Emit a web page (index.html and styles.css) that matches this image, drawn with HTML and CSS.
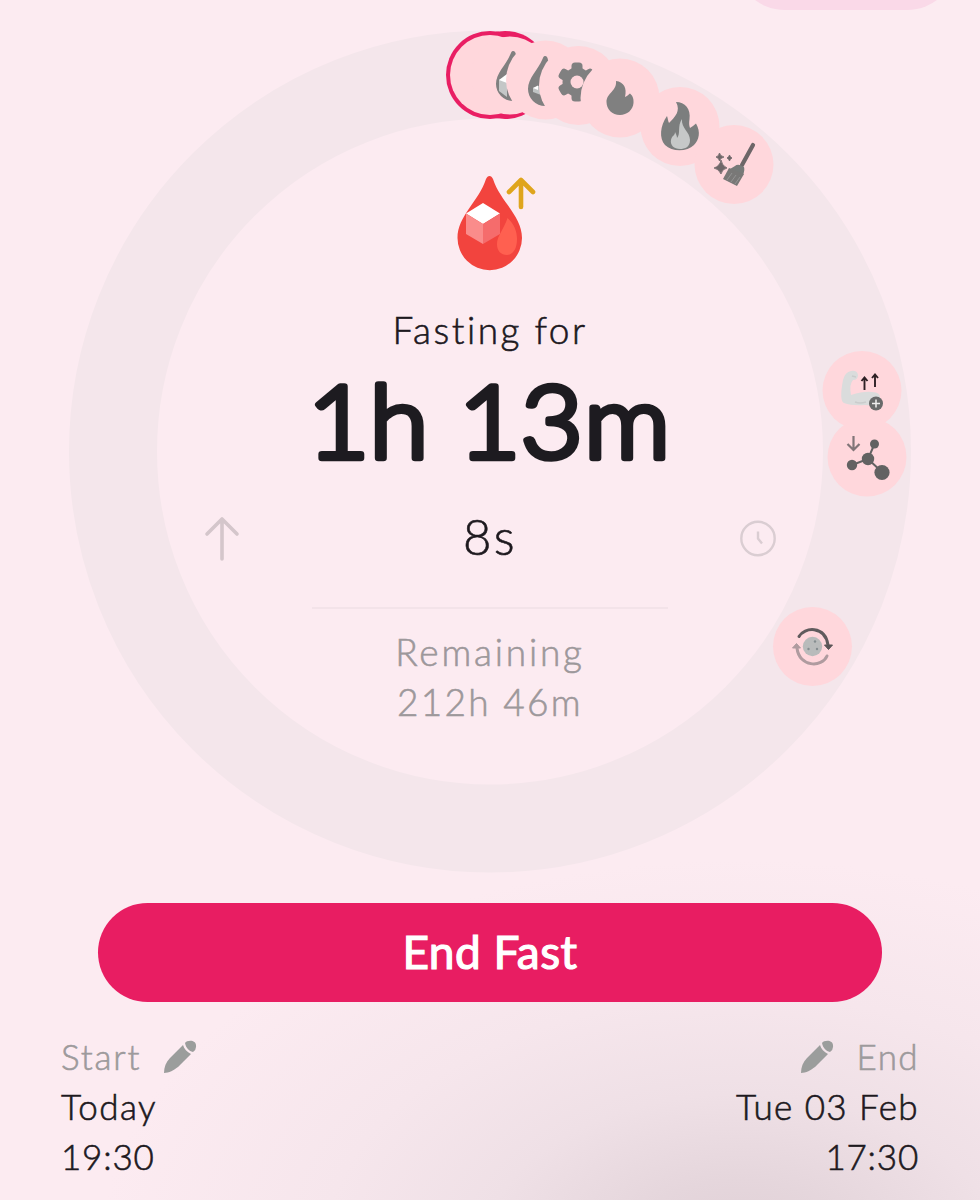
FILE: index.html
```html
<!DOCTYPE html>
<html lang="en">
<head>
<meta charset="utf-8">
<title>Fasting timer</title>
<link rel="stylesheet" href="styles.css">
</head>
<body>
<main class="screen">
  <div class="top-pill"></div>
  <section class="dial">
    <svg class="ring" viewBox="0 0 980 880" width="980" height="880">
      <defs>
        <g id="node"><circle r="39.5" fill="#ffd7dc"/></g>
        <g id="drop">
          <path d="M0-25C1.800-25 2.600-23.500 3-21C7-10 17-5 17 8A17 17 0 0 1-17 8C-17-3-7-11-2.500-22C-1.800-23.500-1.500-25 0-25Z" fill="#808080"/>
        </g>
      </defs>
      <circle cx="490" cy="451.500" r="377" fill="none" stroke="#f4e6eb" stroke-width="88"/>
      <g fill="#e91e63">
        <circle cx="490" cy="75" r="44"/><circle cx="505" cy="75" r="44"/>
      </g>
      <g fill="#ffd7dc">
        <circle cx="490" cy="75" r="40"/><circle cx="510" cy="75.500" r="39"/>
      </g>
      <use href="#drop" x="513" y="76"/>
      <path d="M499 80L507 76V97L499 91Z" fill="#c4c7c7"/><path d="M499 80L507 74V83Z" fill="#fff"/>
      <use href="#node" x="545.500" y="80"/>
      <use href="#drop" x="545" y="81"/>
      <path d="M533 88L541 85V95L533 92Z" fill="#c0c4c4"/><path d="M533 88L538 85.500V90Z" fill="#fff"/>
      <use href="#node" x="578.500" y="85.500"/>
      <g transform="translate(577 82)" fill="#808080">
        <circle r="14.500"/>
        <rect x="-5.500" y="-19.500" width="11" height="39" rx="3.500"/><rect x="-5.500" y="-19.500" width="11" height="39" rx="3.500" transform="rotate(60)"/><rect x="-5.500" y="-19.500" width="11" height="39" rx="3.500" transform="rotate(120)"/>
        <circle r="6.500" fill="#ffd7dc"/>
      </g>
      <use href="#node" x="620" y="98"/>
      <path d="M616 81C624 82 627 88 625 97C628 96 629 94 630 93.500C632 95 634 98 633.500 103C633 110 627 115 620 115C612 115 606.500 109 606.500 102C606.500 93 617 91 616 81Z" fill="#808080"/>
      <use href="#node" x="680" y="126.500"/>
      <path d="M676 102C685 102 691 109 689.500 119C689 123 689 125 690 128C692 127 694 125 696 123.500C701 132 699 140 694 145C687 152 672 152 665 145C659 138 660 126 667 116C668 119 668 121 669 123C675 117 681 111 676 102Z" fill="#7c7e7e"/>
      <path d="M682 119C681 128 690 132 690 140C690 147 685 149 680 149C674 149 670 145 671 140C672 135 675 136 675 132C676 134 677 136 677 138C681 134 677 126 682 119Z" fill="#c6c8c8"/>
      <use href="#node" x="734" y="164.500"/>
      <g fill="#706769">
        <path d="M753 145L742 165" fill="none" stroke="#6d6668" stroke-width="4.200" stroke-linecap="round"/>
        <path d="M735 166Q738 163 744 167Q745 170 743 175L730 169Z" fill="#777a79"/>
        <path d="M729 168L744 174L737 186L723 179Z" fill="#797877"/>
        <path d="M732 173L727 180M736 175L731 182M740 177L735 184" stroke="#9b9b9b" stroke-width=".8"/>
        <path d="M721 160Q722 166 727 168Q722 169 721 174Q719 169 714 168Q720 166 721 160M719.500 153Q720 156 724 157Q720 158 719.500 161Q719 158 716 157Q719 156 719.500 153M729.500 155Q730 157 732 158Q730 159 729.500 161Q729 159 727 158Q729 157 729.500 155" stroke="#706769" stroke-width=".8"/>
      </g>
      <use href="#node" x="862" y="390.500"/>
      <path d="M843 380Q845 372 851 371Q857 370 858 375Q858 380 853 380Q849 384 851 395Q864 391 872 392Q881 392 880 399Q877 406 865 405Q852 406 844 403Q839 401 843 380Z" fill="#dadcdc"/>
      <path d="M852 376L856 377M855 402Q860 404 866 402" fill="none" stroke="#cacccc" stroke-width="1.500"/>
      <path d="M864.500 390V378M861.500 381L864.500 377.500L867.500 381M875 387V375M872 378L875 374.500L878 378" fill="none" stroke="#2d2024" stroke-width="1.900"/>
      <circle cx="876" cy="403.500" r="7" fill="#686a6a"/><path d="M872 403.500H880M876 399.500V407.500" stroke="#eee" stroke-width="1.500"/>
      <use href="#node" x="867" y="457"/>
      <path d="M853.500 436V449M847.500 444L853.500 450L859.500 444" fill="none" stroke="#817578" stroke-width="2.200"/>
      <g fill="#626262"><path d="M852 465L868 459L874.500 444M868 459L882 472" fill="none" stroke="#626262" stroke-width="2"/><circle cx="852" cy="465" r="5.200"/><circle cx="868" cy="459" r="6.200"/><circle cx="874.500" cy="444" r="4.500"/><circle cx="882" cy="472.500" r="7.600"/></g>
      <use href="#node" x="812.500" y="646.500"/>
      <path d="M799 636.500C804 627 825 625 828 645" fill="none" stroke="#605b5d" stroke-width="3" stroke-linecap="round"/><path d="M824.500 645H832.500L828.500 649.500Z" fill="#5a5557" stroke="#5a5557" stroke-linejoin="round"/>
      <path d="M827 656C822 668 799 667 797 648" fill="none" stroke="#af9b9f" stroke-width="3" stroke-linecap="round"/><path d="M792.500 648H800.500L796.500 643.500Z" fill="#af9b9f" stroke="#af9b9f" stroke-linejoin="round"/>
      <circle cx="812.500" cy="646.500" r="9.700" fill="#b9bbbb"/><g fill="#858d90"><circle cx="815" cy="641.500" r="1.200"/><circle cx="808.500" cy="649" r="1.200"/><circle cx="817" cy="649" r="1.200"/></g>
    </svg>
    <div class="readout">
      <svg class="stage-icon" viewBox="450 170 90 104" width="90" height="104">
        <path d="M489.500 176C491 176 492 177 493 179C500 201 522 216 522 238A32.250 32.250 0 0 1 457.500 238C457.500 216 479 201 486 179C487 177 488 176 489.500 176Z" fill="#f2443e"/>
        <path d="M507.500 218C514 224 517 231 517 239C517 250 512 255 507 255C501 255 497 251 497 244C497 236 504 229 507.500 218Z" fill="#ff6050"/>
        <path d="M466 213.500L483 203L500 213.500L483 224Z" fill="#fff"/><path d="M466 213.500L483 224V244L466 234Z" fill="#fa8c8b"/><path d="M500 213.500L483 224V244L500 234Z" fill="#f56c6c"/>
        <path d="M521 207V180M509 192L521 180L533 192" fill="none" stroke="#dfa51d" stroke-width="4.600" stroke-linecap="round" stroke-linejoin="round"/>
      </svg>
      <p class="caption">Fasting for</p>
      <svg class="elapsed" viewBox="0 0 380 110" width="380" height="110"><text transform="scale(1.06 1)" x="5.200 63.800 115 147.700 206.400 266" y="86.500">1h 13m</text></svg>
      <div class="seconds-row">
        <svg width="36" height="46" viewBox="0 0 36 46"><path d="M18 43V3M3 18L18 3L33 18" fill="none" stroke="#d4c6cb" stroke-width="3.600" stroke-linecap="round" stroke-linejoin="round"/></svg>
        <p class="seconds">8s</p>
        <svg width="36" height="38" viewBox="1 0 36 38"><circle cx="19" cy="18.500" r="16.700" fill="none" stroke="#dacdd2" stroke-width="2.400"/><path d="M19 11.500V18.500L23 23.500" fill="none" stroke="#dacdd2" stroke-width="2.400"/></svg>
      </div>
      <div class="rule"></div>
      <p class="remaining label">Remaining</p>
      <p class="remaining value">212h 46m</p>
    </div>
  </section>
  <button class="end-fast">End Fast</button>
  <section class="times">
    <div class="time">
      <div class="heading"><span class="start">Start</span>
        <svg width="34" height="34" viewBox="0 0 34 34" fill="#9b9d9c"><path d="M1 33C1 27 3 22 7 18L20 5C21 9 24 12 28 14L15 27C11 30 6 33 1 33Z"/><path d="M22 3C24 0 34-1 33 7Q33 10 30 12C26 11 23 8 22 3Z"/></svg>
      </div>
      <p class="today">Today</p><p class="clock">19:30</p>
    </div>
    <div class="time time-end">
      <div class="heading">
        <svg width="34" height="34" viewBox="0 0 34 34" fill="#9b9d9c"><path d="M1 33C1 27 3 22 7 18L20 5C21 9 24 12 28 14L15 27C11 30 6 33 1 33Z"/><path d="M22 3C24 0 34-1 33 7Q33 10 30 12C26 11 23 8 22 3Z"/></svg>
        <span class="end">End</span></div>
      <p class="date">Tue 03 Feb</p><p class="clock">17:30</p>
    </div>
  </section>
</main>
</body>
</html>
```
FILE: styles.css
```css
* { box-sizing: border-box; }
body { margin: 0; font-family: Lato, "Noto Sans", sans-serif; font-weight: 300; color: #1d191e; -webkit-text-stroke: .6px; }
p { margin: 0; white-space: nowrap; }
svg { display: block; flex: none; }
.screen {
  position: relative; width: 980px; height: 1200px; overflow: hidden;
  display: flex; flex-direction: column;
  background: radial-gradient(ellipse 640px 390px at 740px 1250px, #dfcfd5 0%, #e5d6dc 18%, #efe0e6 40%, #f6e6ec 65%, rgba(252,235,241,0) 100%), #fcebf1;
}
.top-pill { position: absolute; left: 735px; top: -90px; width: 222px; height: 100px; border-radius: 50px; background: #fad9e8; }
.dial { display: grid; height: 880px; }
.ring, .readout { grid-area: 1 / 1; }
.readout { position: relative; display: flex; flex-direction: column; align-items: center; padding-top: 170px; }
.stage-icon { margin-left: 10px; }
.caption { font-size: 37px; line-height: 50px; margin-top: 31px; letter-spacing: 2.5px; height: 50px; }
.elapsed { margin: 16px 0 0 4px; overflow: visible; }
.elapsed text { font-size: 101px; font-weight: 300; fill: #1d1b20; stroke: #1d1b20; stroke-width: 6.5px; stroke-linejoin: round; }
.seconds-row { width: 572px; height: 60px; margin-top: 28px; display: flex; align-items: center; justify-content: space-between; }
.seconds { font-size: 49px; line-height: 54px; height: 60px; letter-spacing: 2.4px; }
.rule { width: 356px; height: 2px; margin-top: 38px; background: #f3e3e9; }
.remaining { font-size: 37px; line-height: 50px; color: #9d989b; }
.label { margin-top: 18px; letter-spacing: 2.8px; }
.value { letter-spacing: 2.3px; }
.end-fast { width: 784px; height: 99px; margin: 23px auto 0; border: 0; border-radius: 50px; background: #e81d62; color: #fff; font: 400 46px/97px Lato, sans-serif; letter-spacing: .5px; -webkit-text-stroke: 1.2px #fff; padding: 0 0 2px; }
.times { display: flex; justify-content: space-between; padding: 29px 61px 0; font-size: 35px; line-height: 50px; }
.heading { display: flex; align-items: center; gap: 22px; height: 50px; color: #9d9a9c; }
.heading svg { margin-top: 2px; }
.time-end { text-align: right; }
.time-end .heading { justify-content: flex-end; gap: 23px; }
.start { letter-spacing: 1.8px; }
.today, .date, .end { letter-spacing: 1.4px; }
.clock { letter-spacing: .8px; }
```
